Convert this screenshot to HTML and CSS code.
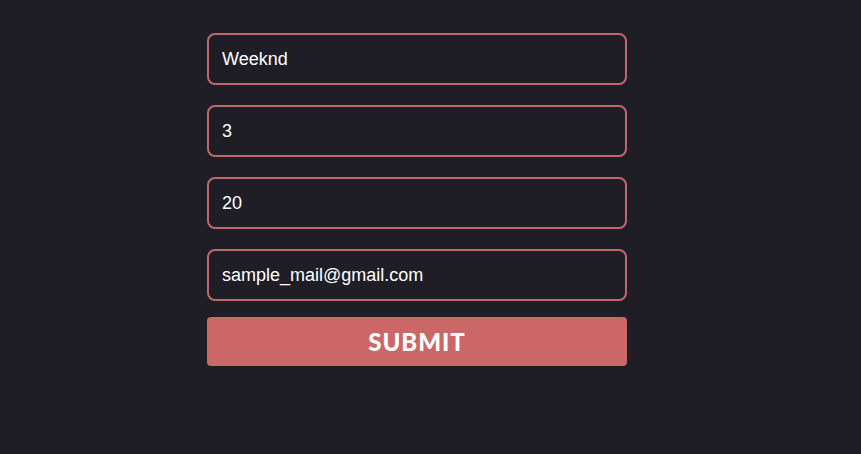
FILE: index.html
```html
<!DOCTYPE html>
<html>
<head>
<meta charset="utf-8">
<link rel="stylesheet" href="styles.css">
</head>
<body>
<main class="page">
<form class="form">
  <input class="field" type="text" value="Weeknd">
  <input class="field" type="text" value="3">
  <input class="field" type="text" value="20">
  <input class="field" type="text" value="sample_mail@gmail.com">
  <button class="submit" type="button">SUBMIT</button>
</form>
</main>
</body>
</html>
```
FILE: styles.css
```css
html, body {
  margin: 0;
  padding: 0;
  background: #1f1e26;
  height: 100%;
}
.page {
  padding-right: 27px;
}
.form {
  width: 420px;
  margin: 0 auto;
  padding-top: 33px;
  display: flex;
  flex-direction: column;
  gap: 20px;
}
.field {
  box-sizing: border-box;
  height: 52px;
  width: 100%;
  background: #1f1e26;
  border: 2px solid #c0676b;
  border-radius: 8px;
  padding: 0 13px;
  color: #ffffff;
  font-family: "Liberation Sans", Arial, sans-serif;
  font-size: 18px;
  outline: none;
}
.submit {
  box-sizing: border-box;
  height: 49px;
  width: 100%;
  margin-top: -4px;
  background: #cb6767;
  border: none;
  border-radius: 4px;
  color: #ffffff;
  font-family: Lato, "Noto Sans", sans-serif;
  font-weight: 900;
  font-size: 24px;
  letter-spacing: 1px;
}
```
